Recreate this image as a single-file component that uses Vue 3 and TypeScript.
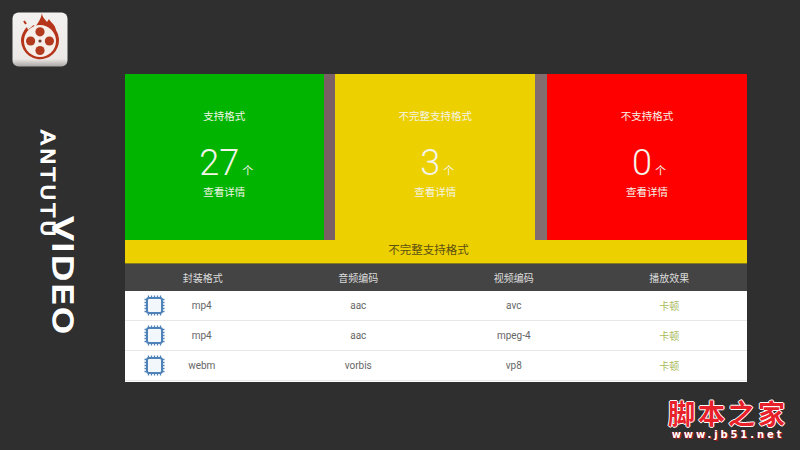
<script setup lang="ts">
const cards = [
  { title: '支持格式', count: 27, tone: 'green' },
  { title: '不完整支持格式', count: 3, tone: 'yellow' },
  { title: '不支持格式', count: 0, tone: 'red' },
]

const columns = ['封装格式', '音频编码', '视频编码', '播放效果']

const rows = [
  { container: 'mp4', audio: 'aac', video: 'avc', result: '卡顿' },
  { container: 'mp4', audio: 'aac', video: 'mpeg-4', result: '卡顿' },
  { container: 'webm', audio: 'vorbis', video: 'vp8', result: '卡顿' },
]

const pins = [4, 7, 10, 13, 16]
</script>

<template>
  <div class="page">
    <aside class="side">
      <svg class="app-icon" viewBox="0 0 56 56" width="56" height="56">
        <defs>
          <linearGradient id="tile" x1="0" y1="0" x2="0" y2="1">
            <stop offset="0" stop-color="#f4f2f0" />
            <stop offset="0.86" stop-color="#ebe8e6" />
            <stop offset="1" stop-color="#a9a5a2" />
          </linearGradient>
        </defs>
        <rect x="0.5" y="0.5" width="55" height="54" rx="6" fill="url(#tile)" />
        <path
          d="M30 1C30 5 33 7 35 10L37 7C39 11 43 12 44 18A19 19 0 1 1 9 29C9 23 12 18 15 15L16 18C18 16 20 14 22 13L23 15C26 11 29 7 30 1z"
          fill="#b5341a"
        />
        <path d="M12 9l2 3" stroke="#b5341a" stroke-width="2" />
        <circle cx="28" cy="29" r="16" fill="#f6efe9" />
        <g fill="#b23a1e">
          <circle cx="28" cy="19.8" r="4.6" />
          <circle cx="18.6" cy="29" r="4.6" />
          <circle cx="37.4" cy="29" r="4.6" />
          <circle cx="28" cy="38.5" r="4.6" />
          <circle cx="28" cy="29" r="1.6" fill="#6b3a2c" />
        </g>
      </svg>
      <div class="brand">
        <span class="brand-sub">ANTUTU</span>
        <span class="brand-main">VIDEO</span>
      </div>
    </aside>

    <main class="panel">
      <section class="cards">
        <div v-for="card in cards" :key="card.tone" class="card" :class="`card--${card.tone}`">
          <p class="card-title">{{ card.title }}</p>
          <p class="card-count">
            <span class="card-num">{{ card.count }}</span><span class="card-unit">个</span>
          </p>
          <p class="card-link">查看详情</p>
        </div>
      </section>

      <div class="strip">不完整支持格式</div>

      <div class="table-head">
        <span v-for="col in columns" :key="col">{{ col }}</span>
      </div>

      <div class="table-body">
        <div v-for="(row, i) in rows" :key="i" class="table-row">
          <div class="cell-first">
            <svg class="chip" viewBox="0 0 21 21" width="21" height="21">
              <g stroke="#4f82b8" stroke-width="1.3">
                <template v-for="p in pins" :key="p">
                  <path :d="`M${p + 0.5} 0.5v3M${p + 0.5} 17.5v3M0.5 ${p + 0.5}h3M17.5 ${p + 0.5}h3`" />
                </template>
              </g>
              <rect x="3" y="3" width="15" height="15" rx="2" fill="#f2f7fc" stroke="#4f82b8" stroke-width="2" />
            </svg>
            <span class="container-name">{{ row.container }}</span>
          </div>
          <span>{{ row.audio }}</span>
          <span>{{ row.video }}</span>
          <span class="result">{{ row.result }}</span>
        </div>
      </div>
    </main>

    <div class="watermark">
      <span class="wm-title">脚本之家</span>
      <span class="wm-url">www.jb51.net</span>
    </div>
  </div>
</template>

<style>
html,
body {
  margin: 0;
  background: #2f2f2f;
}
</style>

<style scoped>
.page {
  display: grid;
  grid-template-columns: 125px 622px 53px;
  grid-template-rows: 382px 68px;
  width: 800px;
  height: 450px;
  overflow: hidden;
  background: #2f2f2f;
  font-family: Roboto, 'Noto Sans CJK SC', sans-serif;
}

.side {
  display: flex;
  flex-direction: column;
  padding: 12px 0 0 12px;
}

.app-icon {
  display: block;
  flex-shrink: 0;
}

.brand {
  display: flex;
  align-items: flex-start;
  margin: 62px 0 0 26px;
  color: #fff;
  font-family: 'DejaVu Sans', sans-serif;
  line-height: 1;
}

.brand-sub,
.brand-main {
  writing-mode: vertical-rl;
  transform-origin: top;
}

.brand-sub {
  font-size: 19px;
  letter-spacing: 3px;
  -webkit-text-stroke: 1px #fff;
  transform: scaleY(1.14);
}

.brand-main {
  margin: 87px 0 0 -8px;
  font-size: 26px;
  letter-spacing: 2px;
  -webkit-text-stroke: 1.5px #fff;
  transform: scaleY(1.29);
}

.panel {
  display: flex;
  flex-direction: column;
  margin-top: 74px;
}

.cards {
  display: grid;
  grid-template-columns: 198.5px 200px 200px;
  justify-content: space-between;
  height: 166px;
  background: linear-gradient(90deg, #75565f 0%, #7d6569 50%, #8d7b78 100%);
}

.card {
  display: flex;
  flex-direction: column;
  align-items: center;
  padding-top: 36px;
  box-sizing: border-box;
  color: #f4f4e8;
}

.card p {
  margin: 0;
}

.card--green {
  background: #00b400;
}

.card--yellow {
  background: #ecd000;
}

.card--red {
  background: #ff0000;
}

.card-title,
.card-link {
  font-size: 10.5px;
  line-height: 14px;
}

.card-count {
  display: flex;
  align-items: baseline;
  margin-top: 18px !important;
  padding-left: 4px;
  line-height: 42px;
}

.card-num {
  font-size: 36px;
  font-weight: 300;
}

.card-unit {
  margin-left: 3px;
  font-size: 11px;
}

.card-link {
  margin-top: -7px !important;
}

.strip {
  height: 23px;
  padding-right: 15px;
  border-bottom: 1px solid #857a20;
  background: #ecd000;
  color: #5c4f14;
  font-size: 11.5px;
  line-height: 21px;
  text-align: center;
}

.table-head,
.table-row {
  display: grid;
  grid-template-columns: repeat(4, 1fr);
  align-items: center;
  justify-items: center;
}

.table-head {
  height: 27px;
  background: #444;
  color: #ddd;
  font-size: 10px;
}

.table-body {
  display: flex;
  flex-direction: column;
  height: 91px;
  background: #fff;
}

.table-row {
  box-sizing: border-box;
  height: 30px;
  border-bottom: 1px solid #e8e8e8;
  color: #666;
  font-size: 10px;
}

.cell-first {
  display: grid;
  grid-template-columns: 1fr auto 1fr;
  align-items: center;
  justify-items: center;
  width: 100%;
}

.container-name {
  margin-right: 2px;
}

.chip {
  justify-self: start;
  margin-left: 19px;
}

.result {
  color: #a9bb5c;
}

.watermark {
  display: flex;
  flex-direction: column;
  grid-column: 2 / 4;
  align-self: start;
  justify-self: end;
  align-items: center;
  margin: 14px 12px 0 0;
}

.wm-title {
  color: #e8202a;
  font-family: 'Noto Sans CJK SC', sans-serif;
  font-size: 27px;
  font-weight: 700;
  letter-spacing: 3px;
  line-height: 33px;
  text-shadow: 1px 0 #fff, -1px 0 #fff, 0 1px #fff, 0 -1px #fff;
}

.wm-url {
  margin-top: 1px;
  color: #fff;
  font-family: 'DejaVu Sans', sans-serif;
  font-size: 10px;
  font-weight: 700;
  letter-spacing: 2.9px;
  line-height: 10px;
  text-shadow: 1px 1px #a01818, -1px 0 #a01818;
}
</style>
